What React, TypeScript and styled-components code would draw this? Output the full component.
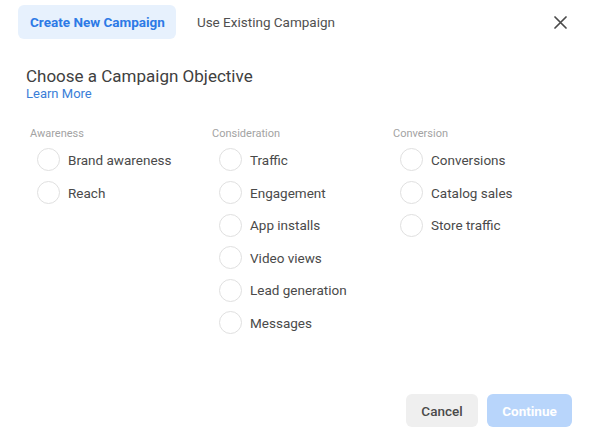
import React from "react";
import styled, { createGlobalStyle } from "styled-components";

const Global = createGlobalStyle`
  html, body { margin: 0; padding: 0; background: #ffffff; }
  body { font-family: Roboto, "Liberation Sans", Arial, sans-serif; }
  * { box-sizing: border-box; }
`;

const Page = styled.div`
  width: 600px;
  height: 435px;
  display: flex;
  flex-direction: column;
  background: #ffffff;
`;

const Header = styled.div`
  display: flex;
  align-items: center;
  height: 39px;
  padding: 5px 0 0 18px;
`;

const Tab = styled.button<{ $active?: boolean }>`
  height: 34px;
  padding: 0 11px 0 12px;
  margin-right: 9px;
  border: none;
  border-radius: 6px;
  background: ${(p) => (p.$active ? "#e7f1fd" : "transparent")};
  color: ${(p) => (p.$active ? "#2d7ae6" : "#505050")};
  font-family: inherit;
  font-size: 13.5px;
  font-weight: ${(p) => (p.$active ? 700 : 400)};
  cursor: pointer;
`;

const Close = styled.button`
  margin-left: auto;
  margin-right: 32px;
  width: 16px;
  height: 16px;
  padding: 0;
  border: none;
  background: none;
  display: flex;
  align-items: center;
  justify-content: center;
  cursor: pointer;
`;

const TitleBlock = styled.div`
  margin-top: 27px;
  padding-left: 26px;
  display: flex;
  flex-direction: column;
`;

const Title = styled.h2`
  margin: 0;
  font-size: 17px;
  line-height: 20px;
  font-weight: 400;
  color: #404040;
`;

const LearnMore = styled.a`
  font-size: 13px;
  line-height: 16px;
  color: #3a7ed8;
  text-decoration: none;
`;

const Columns = styled.div`
  margin-top: 25px;
  padding-left: 30px;
  display: grid;
  grid-template-columns: 182px 181px 1fr;
`;

const Column = styled.div`
  display: flex;
  flex-direction: column;
`;

const GroupLabel = styled.div`
  font-size: 11px;
  line-height: 14px;
  color: #a3a3a3;
  margin-bottom: 2.7px;
`;

const Option = styled.label`
  display: flex;
  align-items: center;
  height: 32.6px;
  padding-left: 7px;
  gap: 8px;
  font-size: 13.5px;
  color: #4a4a4a;
  cursor: pointer;
`;

const Radio = styled.span`
  width: 23px;
  height: 23px;
  border-radius: 50%;
  border: 1.5px solid #e0e0e0;
  background: #ffffff;
  flex: none;
`;

const Footer = styled.div`
  margin-top: auto;
  display: flex;
  justify-content: flex-end;
  gap: 9px;
  padding: 0 28px 8px 0;
`;

const Button = styled.button<{ $primary?: boolean }>`
  height: 33px;
  width: ${(p) => (p.$primary ? "85px" : "72px")};
  border: none;
  border-radius: 6px;
  background: ${(p) => (p.$primary ? "#b8d5fb" : "#efefef")};
  color: ${(p) => (p.$primary ? "#ffffff" : "#4a4a4a")};
  font-family: inherit;
  font-size: 13.5px;
  font-weight: ${(p) => (p.$primary ? 700 : 500)};
  cursor: pointer;
`;

const groups = [
  { label: "Awareness", items: ["Brand awareness", "Reach"] },
  {
    label: "Consideration",
    items: [
      "Traffic",
      "Engagement",
      "App installs",
      "Video views",
      "Lead generation",
      "Messages",
    ],
  },
  { label: "Conversion", items: ["Conversions", "Catalog sales", "Store traffic"] },
];

export default function App() {
  return (
    <Page>
      <Global />
      <Header>
        <Tab $active>Create New Campaign</Tab>
        <Tab>Use Existing Campaign</Tab>
        <Close aria-label="Close">
          <svg width="13" height="13" viewBox="0 0 13 13">
            <path
              d="M1 1 L12 12 M12 1 L1 12"
              stroke="#4a4a4a"
              strokeWidth="1.7"
              strokeLinecap="round"
            />
          </svg>
        </Close>
      </Header>
      <TitleBlock>
        <Title>Choose a Campaign Objective</Title>
        <LearnMore href="#">Learn More</LearnMore>
      </TitleBlock>
      <Columns>
        {groups.map((g) => (
          <Column key={g.label}>
            <GroupLabel>{g.label}</GroupLabel>
            {g.items.map((it) => (
              <Option key={it}>
                <Radio />
                {it}
              </Option>
            ))}
          </Column>
        ))}
      </Columns>
      <Footer>
        <Button>Cancel</Button>
        <Button $primary>Continue</Button>
      </Footer>
    </Page>
  );
}
